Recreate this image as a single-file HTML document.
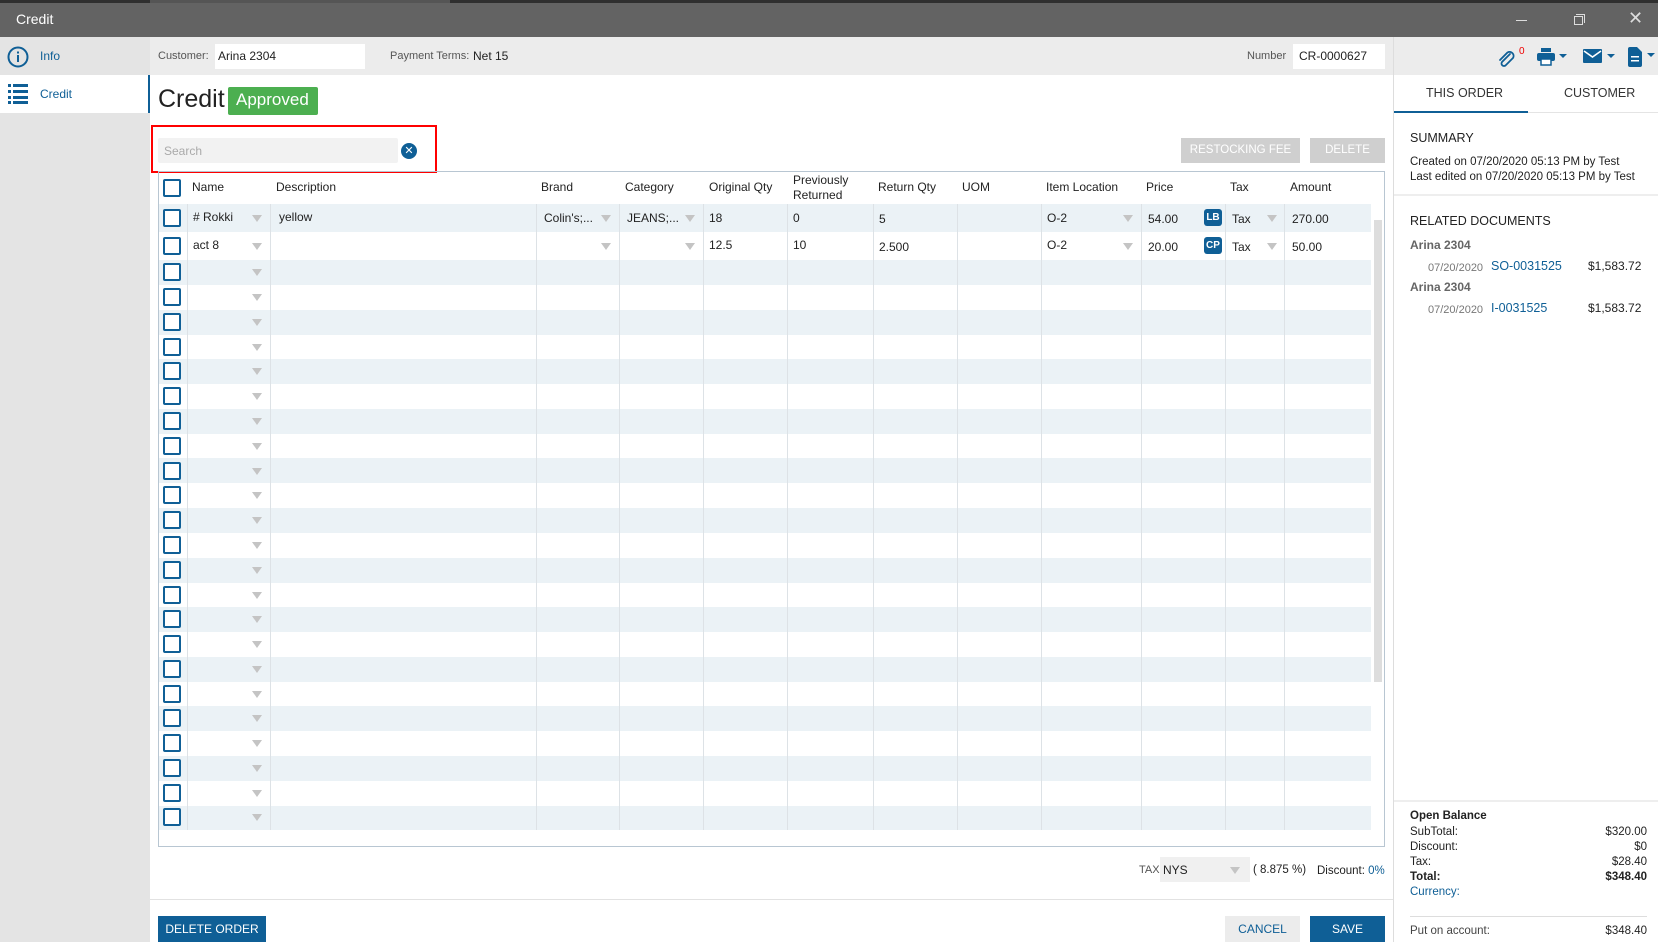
<!DOCTYPE html>
<html><head><meta charset="utf-8"><style>
*{box-sizing:border-box;margin:0;padding:0}
body{width:1658px;height:942px;overflow:hidden;background:#fff;font-family:"Segoe UI","Liberation Sans",sans-serif;font-size:12px;color:#222;position:relative}
.a{position:absolute}
.t{position:absolute;white-space:nowrap}
.cb{position:absolute;left:163px;width:18px;height:18px;border:2px solid #0f5f96;border-radius:2px;background:#fff}
.tri{position:absolute;width:0;height:0;border-left:5px solid transparent;border-right:5px solid transparent;border-top:7px solid #c4c4c4}
.row{position:absolute;left:159px;width:1212px}
.vl{position:absolute;width:1px;background:#dde2e6;top:204px;height:626px}
.hd{position:absolute;top:180px;font-size:12px;color:#222}
.lnk{color:#0f5f96}
</style></head><body>
<!-- title bar -->
<div class="a" style="left:0;top:0;width:1658px;height:3px;background:#2f2f2f"></div>
<div class="a" style="left:150px;top:0;width:300px;height:3px;background:#555"></div>
<div class="a" style="left:0;top:3px;width:1658px;height:34px;background:#636363"></div>
<div class="t" style="left:16px;top:11px;color:#fff;font-size:14px">Credit</div>
<div class="a" style="left:1516px;top:20px;width:11px;height:1px;background:#ddd"></div>
<div class="a" style="left:1574px;top:16px;width:9px;height:9px;border:1px solid #ddd"></div>
<div class="a" style="left:1576px;top:14px;width:9px;height:9px;border-top:1px solid #ddd;border-right:1px solid #ddd"></div>
<div class="t" style="left:1628px;top:8px;color:#ddd;font-size:18px">✕</div>
<!-- sidebar -->
<div class="a" style="left:0;top:37px;width:150px;height:905px;background:#e4e4e4"></div>
<div class="a" style="left:0;top:75px;width:150px;height:38px;background:#fff;border-right:2px solid #0f5f96"></div>
<svg class="a" style="left:7px;top:46px" width="22" height="22"><circle cx="11" cy="11" r="9.5" fill="none" stroke="#0f5f96" stroke-width="2"/><rect x="10" y="9" width="2" height="7" fill="#0f5f96"/><rect x="10" y="5.5" width="2" height="2" fill="#0f5f96"/></svg>
<div class="t lnk" style="left:40px;top:49px;font-size:12px">Info</div>
<svg class="a" style="left:8px;top:84px" width="22" height="20" fill="#0f5f96"><rect x="0" y="0" width="3" height="3"/><rect x="5" y="0" width="15" height="3"/><rect x="0" y="6" width="3" height="3"/><rect x="5" y="6" width="15" height="3"/><rect x="0" y="12" width="3" height="3"/><rect x="5" y="12" width="15" height="3"/><rect x="0" y="17" width="3" height="3"/><rect x="5" y="17" width="15" height="3"/></svg>
<div class="t lnk" style="left:40px;top:87px">Credit</div>
<!-- header strip -->
<div class="a" style="left:150px;top:37px;width:1243px;height:38px;background:#ececec"></div>
<div class="t" style="left:158px;top:50px;font-size:11px;color:#555">Customer:</div>
<div class="a" style="left:215px;top:44px;width:150px;height:25px;background:#fff"></div>
<div class="t" style="left:218px;top:49px">Arina 2304</div>
<div class="t" style="left:390px;top:50px;font-size:11px;color:#555">Payment Terms:</div>
<div class="t" style="left:473px;top:49px">Net 15</div>
<div class="t" style="left:1247px;top:50px;font-size:11px;color:#555">Number</div>
<div class="a" style="left:1293px;top:44px;width:92px;height:25px;background:#fff"></div>
<div class="t" style="left:1299px;top:49px">CR-0000627</div>
<!-- title -->
<div class="t" style="left:158px;top:85px;font-size:25px;color:#222">Credit</div>
<div class="a" style="left:228px;top:87px;width:90px;height:28px;background:#4caf50;border-radius:2px"></div>
<div class="t" style="left:236px;top:90px;font-size:17px;color:#fff">Approved</div>
<!-- search -->
<div class="a" style="left:151px;top:125px;width:286px;height:48px;border:2px solid #f00"></div>
<div class="a" style="left:158px;top:138px;width:240px;height:25px;background:#f2f2f2;border-radius:2px"></div>
<div class="t" style="left:164px;top:144px;color:#aaa">Search</div>
<div class="a" style="left:401px;top:143px;width:16px;height:16px;border-radius:50%;background:#0f5f96;color:#fff;font-size:11px;text-align:center;line-height:16px">✕</div>
<!-- buttons -->
<div class="a" style="left:1181px;top:138px;width:119px;height:25px;background:#cfcfcf;color:#fff;text-align:center;line-height:25px;font-size:11.5px">RESTOCKING FEE</div>
<div class="a" style="left:1310px;top:138px;width:75px;height:25px;background:#cfcfcf;color:#fff;text-align:center;line-height:25px;font-size:11.5px">DELETE</div>
<!-- table -->
<div class="a" style="left:158px;top:171px;width:1227px;height:676px;border:1px solid #b8c6d2"></div>
<div class="row" style="top:204px;height:28px;background:#ebf2f6"></div>
<div class="row" style="top:260px;height:25px;background:#ebf2f6"></div>
<div class="row" style="top:310px;height:25px;background:#ebf2f6"></div>
<div class="row" style="top:359px;height:25px;background:#ebf2f6"></div>
<div class="row" style="top:409px;height:25px;background:#ebf2f6"></div>
<div class="row" style="top:458px;height:25px;background:#ebf2f6"></div>
<div class="row" style="top:508px;height:25px;background:#ebf2f6"></div>
<div class="row" style="top:558px;height:25px;background:#ebf2f6"></div>
<div class="row" style="top:607px;height:25px;background:#ebf2f6"></div>
<div class="row" style="top:657px;height:25px;background:#ebf2f6"></div>
<div class="row" style="top:706px;height:25px;background:#ebf2f6"></div>
<div class="row" style="top:756px;height:25px;background:#ebf2f6"></div>
<div class="row" style="top:806px;height:24px;background:#ebf2f6"></div>
<div class="vl" style="left:187px"></div><div class="vl" style="left:270px"></div><div class="vl" style="left:536px"></div><div class="vl" style="left:619px"></div><div class="vl" style="left:703px"></div><div class="vl" style="left:787px"></div><div class="vl" style="left:873px"></div><div class="vl" style="left:957px"></div><div class="vl" style="left:1041px"></div><div class="vl" style="left:1141px"></div><div class="vl" style="left:1225px"></div><div class="vl" style="left:1284px"></div>
<div class="a" style="left:1374px;top:220px;width:8px;height:462px;background:#ddd"></div>
<!-- headers -->
<div class="cb" style="top:179px"></div>
<div class="hd" style="left:192px">Name</div>
<div class="hd" style="left:276px">Description</div>
<div class="hd" style="left:541px">Brand</div>
<div class="hd" style="left:625px">Category</div>
<div class="hd" style="left:709px">Original Qty</div>
<div class="hd" style="left:793px;top:173px;line-height:15px">Previously<br>Returned</div>
<div class="hd" style="left:878px">Return Qty</div>
<div class="hd" style="left:962px">UOM</div>
<div class="hd" style="left:1046px">Item Location</div>
<div class="hd" style="left:1146px">Price</div>
<div class="hd" style="left:1230px">Tax</div>
<div class="hd" style="left:1290px">Amount</div>
<!-- row1 -->
<div class="cb" style="top:209px"></div>
<div class="t" style="left:193px;top:210px"># Rokki</div><div class="tri" style="left:252px;top:215px"></div>
<div class="t" style="left:279px;top:210px">yellow</div>
<div class="t" style="left:544px;top:211px">Colin's;...</div><div class="tri" style="left:601px;top:215px"></div>
<div class="t" style="left:627px;top:211px">JEANS;...</div><div class="tri" style="left:685px;top:215px"></div>
<div class="t" style="left:709px;top:211px">18</div>
<div class="t" style="left:793px;top:211px">0</div>
<div class="t" style="left:879px;top:212px">5</div>
<div class="t" style="left:1047px;top:211px">O-2</div><div class="tri" style="left:1123px;top:215px"></div>
<div class="t" style="left:1148px;top:212px">54.00</div>
<div class="a" style="left:1204px;top:209px;width:18px;height:17px;background:#0f5f96;border-radius:3px;color:#fff;font-size:10px;font-weight:bold;text-align:center;line-height:17px">LB</div>
<div class="t" style="left:1232px;top:212px">Tax</div><div class="tri" style="left:1267px;top:215px"></div>
<div class="t" style="left:1292px;top:212px">270.00</div>
<!-- row2 -->
<div class="cb" style="top:237px"></div>
<div class="t" style="left:193px;top:238px">act 8</div><div class="tri" style="left:252px;top:243px"></div>
<div class="tri" style="left:601px;top:243px"></div><div class="tri" style="left:685px;top:243px"></div>
<div class="t" style="left:709px;top:238px">12.5</div>
<div class="t" style="left:793px;top:238px">10</div>
<div class="t" style="left:879px;top:240px">2.500</div>
<div class="t" style="left:1047px;top:238px">O-2</div><div class="tri" style="left:1123px;top:243px"></div>
<div class="t" style="left:1148px;top:240px">20.00</div>
<div class="a" style="left:1204px;top:237px;width:18px;height:17px;background:#0f5f96;border-radius:3px;color:#fff;font-size:10px;font-weight:bold;text-align:center;line-height:17px">CP</div>
<div class="t" style="left:1232px;top:240px">Tax</div><div class="tri" style="left:1267px;top:243px"></div>
<div class="t" style="left:1292px;top:240px">50.00</div>
<!-- empty rows -->
<div class="cb" style="top:263px"></div><div class="tri" style="left:252px;top:269px"></div>
<div class="cb" style="top:288px"></div><div class="tri" style="left:252px;top:294px"></div>
<div class="cb" style="top:313px"></div><div class="tri" style="left:252px;top:319px"></div>
<div class="cb" style="top:338px"></div><div class="tri" style="left:252px;top:344px"></div>
<div class="cb" style="top:362px"></div><div class="tri" style="left:252px;top:368px"></div>
<div class="cb" style="top:387px"></div><div class="tri" style="left:252px;top:393px"></div>
<div class="cb" style="top:412px"></div><div class="tri" style="left:252px;top:418px"></div>
<div class="cb" style="top:437px"></div><div class="tri" style="left:252px;top:443px"></div>
<div class="cb" style="top:462px"></div><div class="tri" style="left:252px;top:468px"></div>
<div class="cb" style="top:486px"></div><div class="tri" style="left:252px;top:492px"></div>
<div class="cb" style="top:511px"></div><div class="tri" style="left:252px;top:517px"></div>
<div class="cb" style="top:536px"></div><div class="tri" style="left:252px;top:542px"></div>
<div class="cb" style="top:561px"></div><div class="tri" style="left:252px;top:567px"></div>
<div class="cb" style="top:586px"></div><div class="tri" style="left:252px;top:592px"></div>
<div class="cb" style="top:610px"></div><div class="tri" style="left:252px;top:616px"></div>
<div class="cb" style="top:635px"></div><div class="tri" style="left:252px;top:641px"></div>
<div class="cb" style="top:660px"></div><div class="tri" style="left:252px;top:666px"></div>
<div class="cb" style="top:685px"></div><div class="tri" style="left:252px;top:691px"></div>
<div class="cb" style="top:709px"></div><div class="tri" style="left:252px;top:715px"></div>
<div class="cb" style="top:734px"></div><div class="tri" style="left:252px;top:740px"></div>
<div class="cb" style="top:759px"></div><div class="tri" style="left:252px;top:765px"></div>
<div class="cb" style="top:784px"></div><div class="tri" style="left:252px;top:790px"></div>
<div class="cb" style="top:808px"></div><div class="tri" style="left:252px;top:814px"></div>
<!-- tax line -->
<div class="t" style="left:1139px;top:864px;font-size:11px;color:#555">TAX</div>
<div class="a" style="left:1160px;top:857px;width:90px;height:25px;background:#f0f0f0"></div>
<div class="t" style="left:1163px;top:863px">NYS</div><div class="tri" style="left:1230px;top:867px"></div>
<div class="t" style="left:1253px;top:864px;font-size:11.5px">( 8.875 %)</div>
<div class="t" style="left:1317px;top:865px;font-size:11.5px">Discount: <span class="lnk">0%</span></div>
<!-- footer -->
<div class="a" style="left:150px;top:899px;width:1243px;height:1px;background:#e2e2e2"></div>
<div class="a" style="left:158px;top:916px;width:108px;height:26px;background:#0f5f96;color:#fff;text-align:center;line-height:26px;font-size:12px">DELETE ORDER</div>
<div class="a" style="left:1225px;top:916px;width:75px;height:26px;background:#ececec;color:#0f5f96;text-align:center;line-height:26px;font-size:12px">CANCEL</div>
<div class="a" style="left:1310px;top:916px;width:75px;height:26px;background:#0f5f96;color:#fff;text-align:center;line-height:26px;font-size:12px">SAVE</div>
<!-- right panel -->
<div class="a" style="left:1393px;top:37px;width:1px;height:905px;background:#ddd"></div>
<div class="a" style="left:1394px;top:37px;width:264px;height:38px;background:#ececec"></div>
<svg class="a" style="left:1497px;top:48px" width="18" height="20"><path d="M13 6 L5 14 a2.5 2.5 0 0 0 3.5 3.5 L16 10 a4 4 0 0 0 -5.5 -5.5 L3 12" fill="none" stroke="#0f5f96" stroke-width="1.8" stroke-linecap="round"/></svg>
<div class="t" style="left:1519px;top:46px;font-size:10px;color:#e00">0</div>
<svg class="a" style="left:1537px;top:48px" width="34" height="18" fill="#0f5f96"><rect x="4" y="0" width="10" height="4"/><rect x="0" y="5" width="18" height="8" rx="2"/><rect x="4" y="11" width="10" height="6" fill="#fff" stroke="#0f5f96" stroke-width="1.5"/><path d="M22 6h8l-4 4z"/></svg>
<svg class="a" style="left:1583px;top:49px" width="34" height="16" fill="#0f5f96"><rect x="0" y="0" width="19" height="14" rx="1"/><path d="M1 2l8.5 6 8.5-6" stroke="#fff" stroke-width="1.6" fill="none"/><path d="M24 5h8l-4 4z"/></svg>
<svg class="a" style="left:1628px;top:47px" width="30" height="20" fill="#0f5f96"><path d="M0 2a2 2 0 0 1 2-2h7l5 5v13a2 2 0 0 1-2 2h-10a2 2 0 0 1-2-2z"/><rect x="3" y="9" width="8" height="1.5" fill="#fff"/><rect x="3" y="13" width="8" height="1.5" fill="#fff"/><path d="M19 6h8l-4 4z"/></svg>
<div class="t" style="left:1426px;top:86px;font-size:12.5px;color:#333">THIS ORDER</div>
<div class="t" style="left:1564px;top:86px;font-size:12.5px;color:#333">CUSTOMER</div>
<div class="a" style="left:1394px;top:111px;width:134px;height:2px;background:#0f5f96"></div>
<div class="a" style="left:1528px;top:112px;width:130px;height:1px;background:#e4e4e4"></div>
<div class="t" style="left:1410px;top:131px;font-size:12.5px;color:#222">SUMMARY</div>
<div class="t" style="left:1410px;top:156px;font-size:11.5px">Created on 07/20/2020 05:13 PM by Test</div>
<div class="t" style="left:1410px;top:171px;font-size:11.5px">Last edited on 07/20/2020 05:13 PM by Test</div>
<div class="a" style="left:1394px;top:194px;width:264px;height:2px;background:#eee"></div>
<div class="t" style="left:1410px;top:214px;font-size:12.5px;color:#222">RELATED DOCUMENTS</div>
<div class="t" style="left:1410px;top:238px;font-size:12px;font-weight:bold;color:#666">Arina 2304</div>
<div class="t" style="left:1428px;top:262px;font-size:11px;color:#777">07/20/2020</div>
<div class="t lnk" style="left:1491px;top:259px;font-size:12.5px">SO-0031525</div>
<div class="t" style="left:1588px;top:259px;font-size:12px">$1,583.72</div>
<div class="t" style="left:1410px;top:280px;font-size:12px;font-weight:bold;color:#666">Arina 2304</div>
<div class="t" style="left:1428px;top:304px;font-size:11px;color:#777">07/20/2020</div>
<div class="t lnk" style="left:1491px;top:301px;font-size:12.5px">I-0031525</div>
<div class="t" style="left:1588px;top:301px;font-size:12px">$1,583.72</div>
<div class="a" style="left:1394px;top:800px;width:264px;height:2px;background:#eee"></div>
<div class="t" style="left:1410px;top:810px;font-size:11.5px;font-weight:bold">Open Balance</div>
<div class="t" style="left:1410px;top:825px;font-size:11.5px;line-height:15px">SubTotal:<br>Discount:<br>Tax:<br><b>Total:</b><br><span class="lnk">Currency:</span></div>
<div class="t" style="right:11px;top:825px;font-size:11.5px;line-height:15px;text-align:right">$320.00<br>$0<br>$28.40<br><b>$348.40</b></div>
<div class="a" style="left:1410px;top:916px;width:237px;height:1px;background:#ddd"></div>
<div class="t" style="left:1410px;top:925px;font-size:11.5px;color:#444">Put on account:</div>
<div class="t" style="right:11px;top:925px;font-size:11.5px">$348.40</div>
</body></html>
